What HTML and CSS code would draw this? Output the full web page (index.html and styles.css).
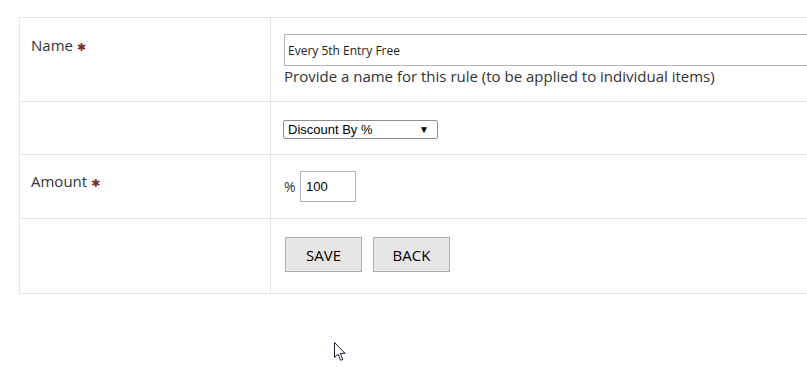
FILE: index.html
```html
<!DOCTYPE html>
<html lang="en">
<head>
  <meta charset="UTF-8">
  <meta name="viewport" content="width=device-width, initial-scale=1.0">
  <title>Edit Rule</title>
  <link rel="stylesheet" href="styles.css">
</head>
<body>
  <form id="ruleForm" class="rule-form">
    <table class="form-table">
      <tr class="row-name">
        <td class="label-cell">Name <span class="req">&#10033;</span></td>
        <td class="field-cell">
          <input type="text" class="text-input" value="Every 5th Entry Free">
          <div class="help">Provide a name for this rule (to be applied to individual items)</div>
        </td>
      </tr>
      <tr class="row-type">
        <td class="label-cell"></td>
        <td class="field-cell">
          <div class="fake-select">
            <span>Discount By %</span>
            <span class="arrow">&#9660;</span>
          </div>
        </td>
      </tr>
      <tr class="row-amount">
        <td class="label-cell">Amount <span class="req">&#10033;</span></td>
        <td class="field-cell">
          <span class="unit">%</span><input type="text" class="amount-input" value="100">
        </td>
      </tr>
      <tr class="row-actions">
        <td class="label-cell"></td>
        <td class="field-cell">
          <div class="actions">
            <button type="button" class="btn">SAVE</button>
            <button type="button" class="btn">BACK</button>
          </div>
        </td>
      </tr>
    </table>
  </form>

  <!-- mouse pointer -->
  <svg class="cursor" width="13" height="20" viewBox="0 0 13 20">
    <path d="M0.5 0.5 L0.5 15.5 L4 12.2 L6.6 18.3 L8.8 17.4 L6.3 11.4 L11 11.4 Z" fill="#fff" stroke="#1a1a2a" stroke-width="1"/>
  </svg>
</body>
</html>
```

FILE: styles.css
```css
html, body {
  overflow: hidden;
}

body {
  margin: 0;
  padding: 17px 0 0 19px;
  background: #fff;
  font-family: "Open Sans", "Liberation Sans", sans-serif;
  font-size: 15px;
  color: #333;
  width: 900px;
  height: 379px;
  box-sizing: border-box;
}

.form-table {
  border-collapse: collapse;
  width: 880px;
}

.form-table td {
  border: 1px solid #e5e5e5;
  vertical-align: top;
  padding: 16px 12px 16px 11px;
  line-height: 20px;
}

.label-cell {
  width: 227px;
}

.form-table .field-cell {
  padding-left: 13px;
}

.row-name .label-cell {
  padding-top: 17px;
}

.row-name .field-cell {
  padding-bottom: 15px;
}

.req {
  color: #7b2b2b;
  font-family: "DejaVu Sans", sans-serif;
  font-size: 11px;
  vertical-align: 0;
}

.text-input {
  display: block;
  width: 600px;
  height: 32px;
  margin: 0;
  padding: 0 3px;
  border: 1px solid #b5b5b5;
  box-sizing: border-box;
  font-family: "Open Sans", "Liberation Sans", sans-serif;
  font-size: 12px;
  color: #222;
}

.row-type .field-cell {
  padding-top: 18px;
  padding-bottom: 15px;
}

.fake-select {
  display: flex;
  justify-content: space-between;
  align-items: center;
  width: 155px;
  height: 19px;
  margin-left: -1px;
  padding: 0 8px 0 4px;
  border: 1px solid #8f8f8f;
  border-radius: 2px;
  box-sizing: border-box;
  font-family: "Liberation Sans", Arial, sans-serif;
  font-size: 13px;
  line-height: 17px;
  color: #000;
}

.fake-select .arrow {
  font-size: 10px;
}

.unit {
  display: inline-block;
  width: 16px;
  vertical-align: middle;
  font-size: 14px;
}

.amount-input {
  width: 56px;
  height: 31px;
  margin: 0;
  padding: 0 5px;
  border: 1px solid #b5b5b5;
  box-sizing: border-box;
  vertical-align: middle;
  font-family: "Liberation Sans", Arial, sans-serif;
  font-size: 13px;
  color: #000;
}

.row-amount .field-cell {
  padding-top: 16px;
  padding-bottom: 16px;
}

.row-actions .field-cell {
  padding-top: 18px;
  padding-bottom: 21px;
}

.actions {
  display: flex;
  gap: 11px;
  margin-left: 1px;
}

.btn {
  width: 77px;
  height: 35px;
  padding: 0;
  background: #e6e6e6;
  border: 1px solid #adadad;
  font-family: "Open Sans", "Liberation Sans", sans-serif;
  font-size: 15px;
  font-weight: normal;
  color: #000;
  cursor: pointer;
}

.cursor {
  position: absolute;
  left: 334px;
  top: 342px;
}
```
